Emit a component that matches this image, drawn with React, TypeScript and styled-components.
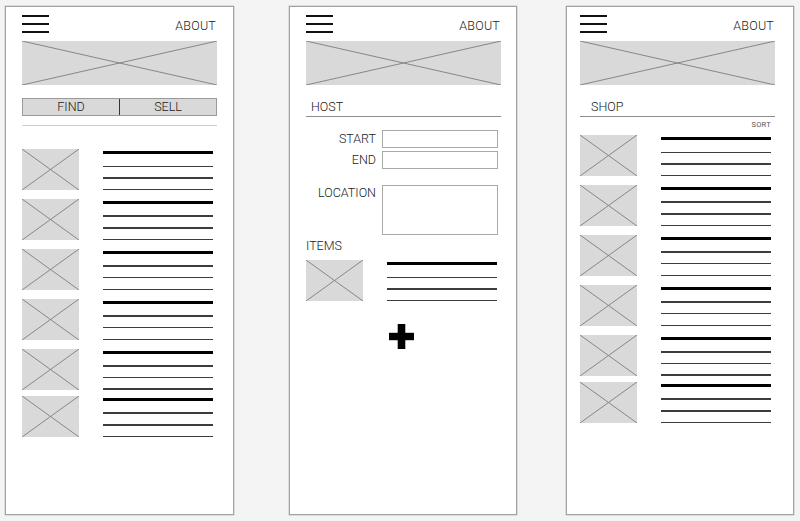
import React from "react";
import styled, { createGlobalStyle } from "styled-components";

const GlobalStyle = createGlobalStyle`
  html, body {
    margin: 0;
    padding: 0;
    background: #f4f4f4;
  }
  body {
    font-family: Roboto, "Liberation Sans", sans-serif;
    font-weight: 300;
    color: #222;
  }
`;

const Stage = styled.div`
  display: flex;
  align-items: flex-start;
  width: 800px;
  height: 521px;
  padding-top: 6px;
  box-sizing: border-box;
`;

const Phone = styled.div<{ $ml: number; $pl: number; $w: number }>`
  box-sizing: border-box;
  width: ${(p) => p.$w}px;
  height: 509px;
  margin-left: ${(p) => p.$ml}px;
  padding: 8px 0 0 ${(p) => p.$pl}px;
  background: #fff;
  border: 1px solid #a3a3a3;
  box-shadow: 0 0 0 0.5px #c4c4c4;
  display: flex;
  flex-direction: column;
`;

const Content = styled.div`
  width: 195px;
  display: flex;
  flex-direction: column;
`;

const TopBar = styled.div`
  display: flex;
  justify-content: space-between;
  align-items: center;
  height: 18px;
`;

const Burger = styled.div`
  width: 27px;
  height: 18px;
  display: flex;
  flex-direction: column;
  justify-content: space-between;
  span {
    display: block;
    height: 2px;
    background: #111;
  }
`;

const NavLink = styled.span`
  font-size: 12.5px;
  letter-spacing: 0.2px;
  color: #1a1a1a;
  margin: 3px 1px 0 0;
  line-height: 14px;
`;

const Placeholder = styled.div<{ $w: number; $h: number; $mt?: number }>`
  width: ${(p) => p.$w}px;
  height: ${(p) => p.$h}px;
  margin-top: ${(p) => p.$mt ?? 0}px;
  background: #d9d9d9;
  flex-shrink: 0;
  svg {
    display: block;
    width: 100%;
    height: 100%;
  }
`;

const Crossed: React.FC<{ w: number; h: number; mt?: number }> = ({ w, h, mt }) => (
  <Placeholder $w={w} $h={h} $mt={mt}>
    <svg viewBox={`0 0 ${w} ${h}`} preserveAspectRatio="none">
      <line x1="0" y1="0" x2={w} y2={h} stroke="#7d7d7d" strokeWidth="0.9" />
      <line x1={w} y1="0" x2="0" y2={h} stroke="#7d7d7d" strokeWidth="0.9" />
    </svg>
  </Placeholder>
);

const Tabs = styled.div`
  margin-top: 13px;
  display: flex;
  height: 18px;
  box-sizing: border-box;
  border: 1px solid #9a9a9a;
  background: #d9d9d9;
`;

const Tab = styled.div<{ $divider?: boolean }>`
  flex: 1;
  display: flex;
  align-items: center;
  justify-content: center;
  font-size: 12.5px;
  line-height: 14px;
  color: #1a1a1a;
  border-left: ${(p) => (p.$divider ? "1px solid #333" : "none")};
`;

const Rule = styled.div<{ $mt: number; $c: string; $h: number }>`
  margin-top: ${(p) => p.$mt}px;
  height: ${(p) => p.$h}px;
  background: ${(p) => p.$c};
`;

const List = styled.div<{ $mt: number }>`
  margin-top: ${(p) => p.$mt}px;
  display: flex;
  flex-direction: column;
`;

const Row = styled.div<{ $mt: number }>`
  display: flex;
  gap: 24px;
  margin-top: ${(p) => p.$mt}px;
`;

const Lines = styled.div`
  width: 110px;
  display: flex;
  flex-direction: column;
  padding-top: 2px;
`;

const Line = styled.div<{ $bold?: boolean; $mt: number }>`
  height: ${(p) => (p.$bold ? 3 : 1.5)}px;
  margin-top: ${(p) => p.$mt}px;
  background: ${(p) => (p.$bold ? "#000" : "#3c3c3c")};
`;

const TextBlock: React.FC = () => (
  <Lines>
    <Line $bold $mt={0} />
    <Line $mt={11.5} />
    <Line $mt={10.2} />
    <Line $mt={10.2} />
  </Lines>
);

const ItemRow: React.FC<{ mt: number }> = ({ mt }) => (
  <Row $mt={mt}>
    <Crossed w={57} h={41} />
    <TextBlock />
  </Row>
);

const SectionTitle = styled.div<{ $pl: number }>`
  margin-top: 15px;
  padding-left: ${(p) => p.$pl}px;
  font-size: 12.5px;
  line-height: 14px;
  color: #1a1a1a;
  padding-bottom: 2px;
  border-bottom: 1px solid #8c8c8c;
`;

const Sort = styled.div`
  align-self: flex-end;
  margin: 3px 4px 0 0;
  font-size: 7.5px;
  font-weight: 400;
  line-height: 9px;
  letter-spacing: 0.3px;
  color: #555;
`;

const Form = styled.div`
  margin-top: 13px;
  display: grid;
  grid-template-columns: 70px 116px;
  column-gap: 6px;
  row-gap: 3px;
`;

const Label = styled.label<{ $top?: boolean; $mt?: number }>`
  font-size: 12.5px;
  line-height: 14px;
  color: #1a1a1a;
  text-align: right;
  align-self: ${(p) => (p.$top ? "start" : "center")};
  margin-top: ${(p) => p.$mt ?? 0}px;
  padding-top: ${(p) => (p.$top ? 1 : 0)}px;
`;

const Field = styled.div<{ $h: number; $mt?: number }>`
  box-sizing: border-box;
  height: ${(p) => p.$h}px;
  margin-top: ${(p) => p.$mt ?? 0}px;
  border: 1px solid #a9a9a9;
  background: #fff;
`;

const SubTitle = styled.div`
  margin-top: 4px;
  font-size: 12.5px;
  line-height: 14px;
  color: #1a1a1a;
`;

const AddRow = styled.div`
  margin-top: 23px;
  padding-left: 83px;
  svg {
    display: block;
  }
`;

const Header: React.FC = () => (
  <>
    <TopBar>
      <Burger>
        <span />
        <span />
        <span />
      </Burger>
      <NavLink>ABOUT</NavLink>
    </TopBar>
    <Crossed w={195} h={44} mt={8} />
  </>
);

const FindScreen: React.FC = () => (
  <Phone $ml={5} $pl={16} $w={229}>
    <Content>
      <Header />
      <Tabs>
        <Tab>FIND</Tab>
        <Tab $divider>SELL</Tab>
      </Tabs>
      <Rule $mt={8.5} $h={1.5} $c="#cfcfcf" />
      <List $mt={23}>
        {[0, 8.5, 8.5, 8.5, 8.5, 6].map((m, i) => (
          <ItemRow key={i} mt={m} />
        ))}
      </List>
    </Content>
  </Phone>
);

const HostScreen: React.FC = () => (
  <Phone $ml={55} $pl={16} $w={228}>
    <Content>
      <Header />
      <SectionTitle $pl={5}>HOST</SectionTitle>
      <Form>
        <Label>START</Label>
        <Field $h={18} />
        <Label>END</Label>
        <Field $h={18} />
        <Label $top $mt={13}>LOCATION</Label>
        <Field $h={50} $mt={13} />
      </Form>
      <SubTitle>ITEMS</SubTitle>
      <List $mt={7}>
        <ItemRow mt={0} />
      </List>
      <AddRow>
        <svg width="25" height="25" viewBox="0 0 25 25">
          <rect x="8.7" y="0" width="7.6" height="25" fill="#000" />
          <rect x="0" y="8.8" width="25" height="7.4" fill="#000" />
        </svg>
      </AddRow>
    </Content>
  </Phone>
);

const ShopScreen: React.FC = () => (
  <Phone $ml={49} $pl={13} $w={228}>
    <Content>
      <Header />
      <SectionTitle $pl={11}>SHOP</SectionTitle>
      <Sort>SORT</Sort>
      <List $mt={6}>
        {[0, 8.5, 8.5, 8.5, 8.5, 6].map((m, i) => (
          <ItemRow key={i} mt={m} />
        ))}
      </List>
    </Content>
  </Phone>
);

const App: React.FC = () => (
  <>
    <GlobalStyle />
    <Stage>
      <FindScreen />
      <HostScreen />
      <ShopScreen />
    </Stage>
  </>
);

export default App;
